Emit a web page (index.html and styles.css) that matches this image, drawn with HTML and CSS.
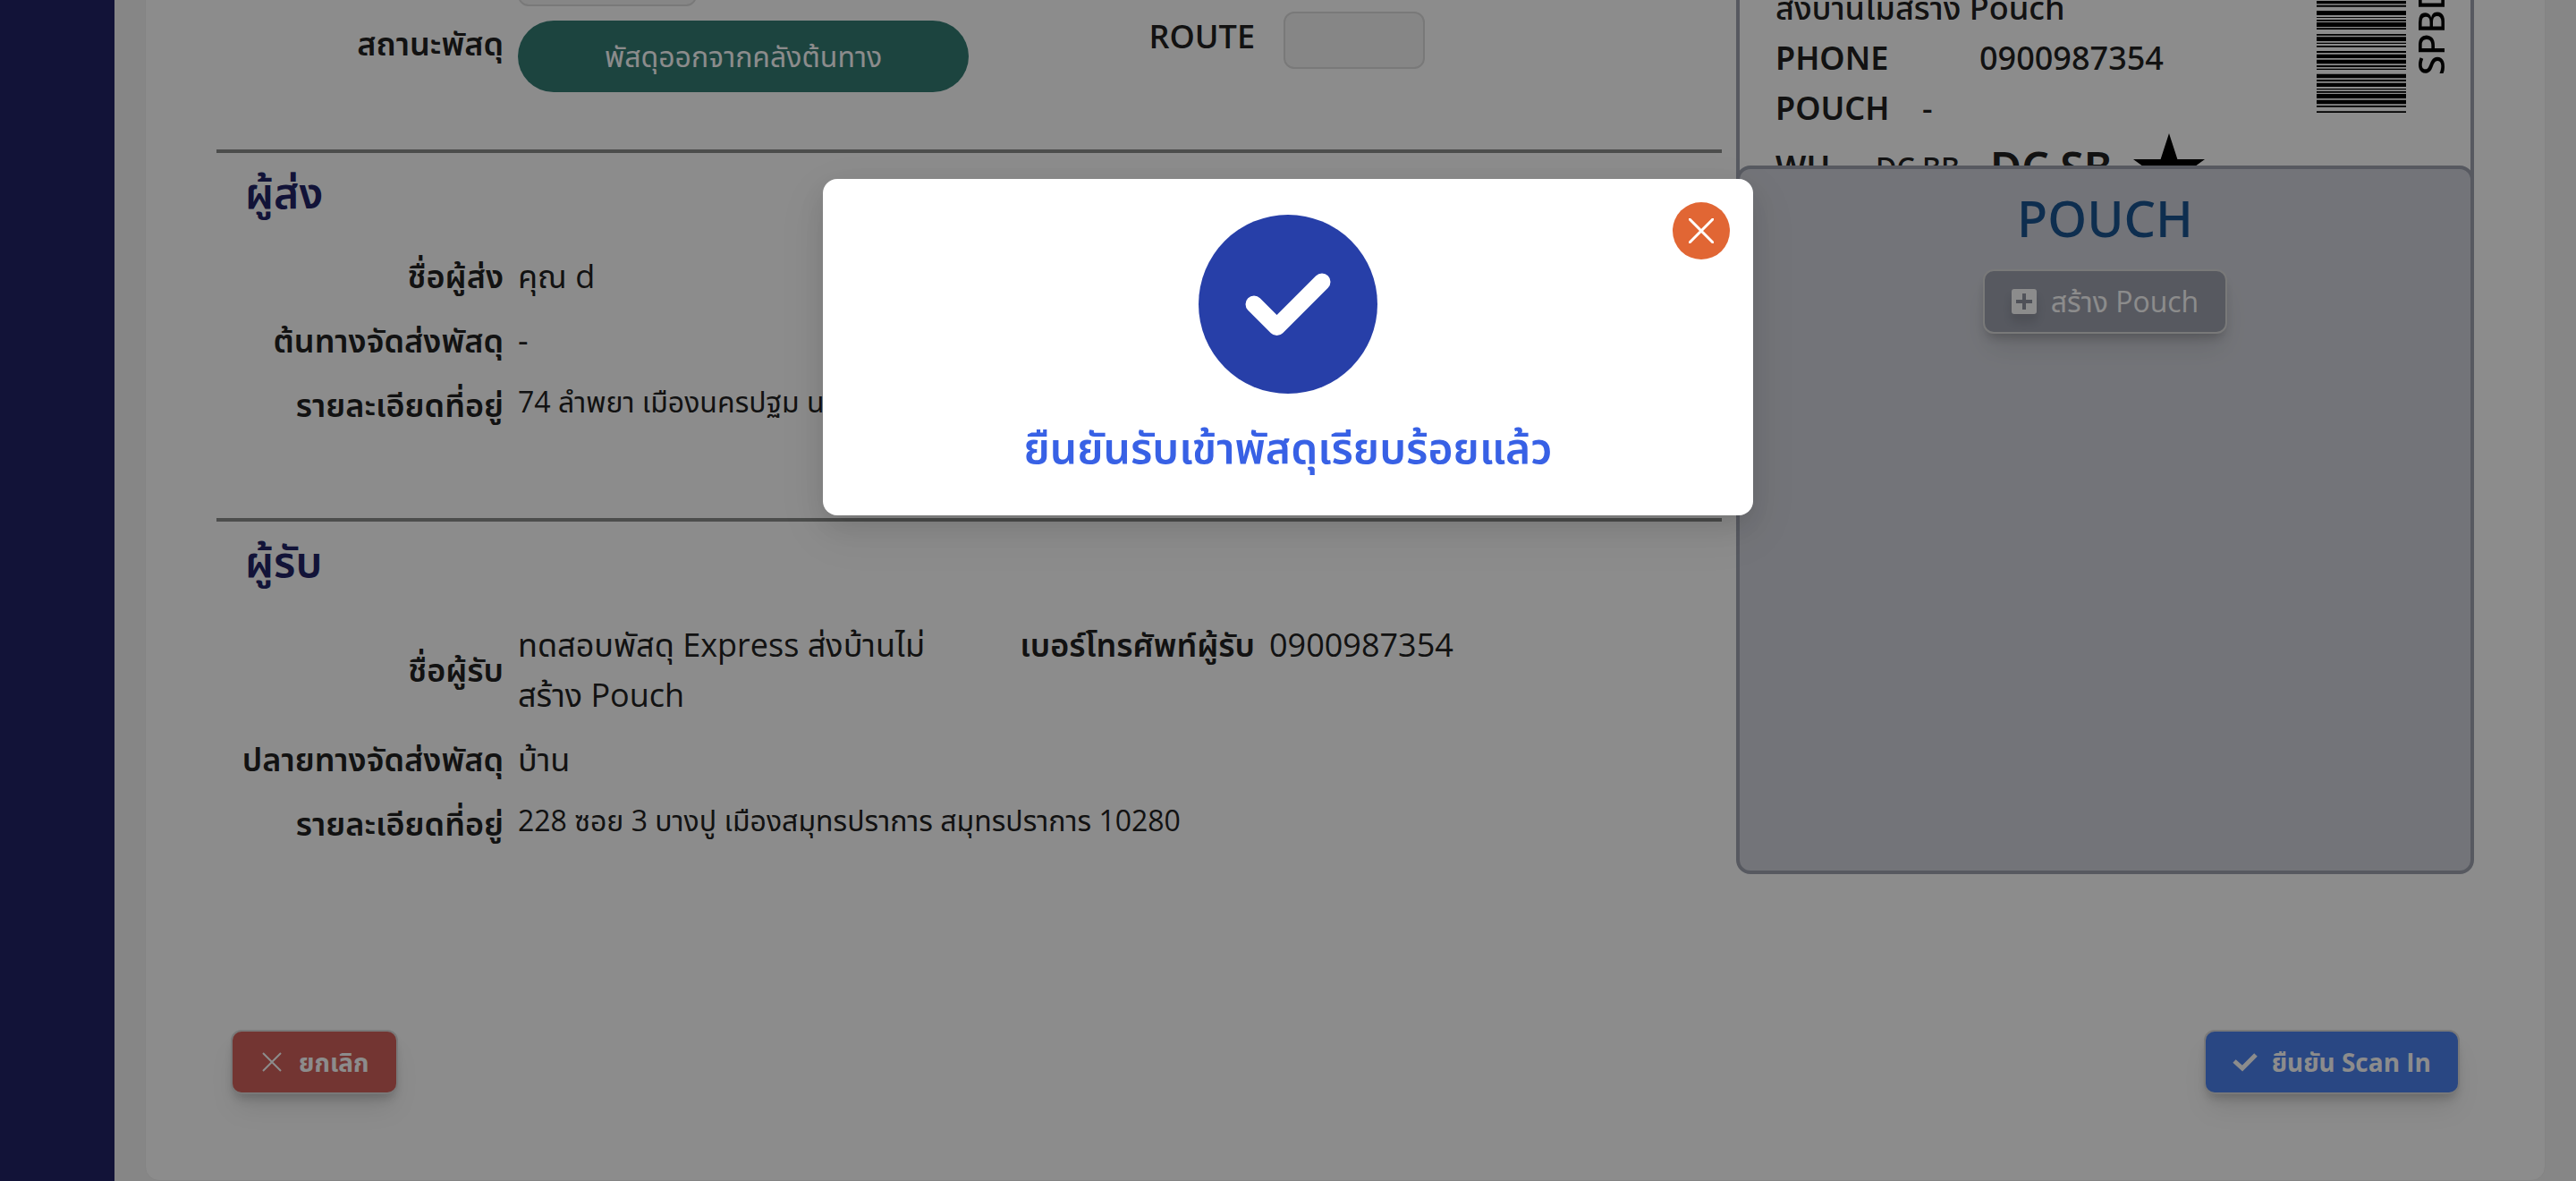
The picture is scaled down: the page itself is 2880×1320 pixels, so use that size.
FILE: index.html
```html
<!DOCTYPE html>
<html lang="th">
<head>
<meta charset="utf-8">
<title>Scan In</title>
<link rel="stylesheet" href="styles.css">
</head>
<body>
<div class="app">
  <aside class="sidebar"></aside>
  <div class="page">
    <main class="card">
      <div class="columns">
        <div class="details">
          <section class="summary">
            <div class="summary-left">
              <label class="label" for="size"></label>
              <input class="box box-wide" id="size" type="text" aria-label="ขนาด" readonly>
              <span class="label status-label">สถานะพัสดุ</span>
              <span class="pill">พัสดุออกจากคลังต้นทาง</span>
            </div>
            <div class="summary-right">
              <label class="label" for="route">ROUTE</label>
              <input class="box" id="route" type="text" readonly>
            </div>
          </section>
          <section class="party">
            <h2 class="party-title">ผู้ส่ง</h2>
            <dl class="fields">
              <dt class="label">ชื่อผู้ส่ง</dt><dd class="value">คุณ d</dd>
              <dt class="label">ต้นทางจัดส่งพัสดุ</dt><dd class="value">-</dd>
              <dt class="label">รายละเอียดที่อยู่</dt><dd class="value address">74 ลำพยา เมืองนครปฐม นครปฐม 73000</dd>
            </dl>
          </section>
          <section class="party">
            <h2 class="party-title">ผู้รับ</h2>
            <dl class="fields">
              <dt class="label">ชื่อผู้รับ</dt><dd class="value">ทดสอบพัสดุ Express ส่งบ้านไม่<br>สร้าง Pouch</dd>
              <dt class="label phone">เบอร์โทรศัพท์ผู้รับ</dt><dd class="value phone">0900987354</dd>
              <dt class="label">ปลายทางจัดส่งพัสดุ</dt><dd class="value">บ้าน</dd>
              <dt class="label">รายละเอียดที่อยู่</dt><dd class="value address">228 ซอย 3 บางปู เมืองสมุทรปราการ สมุทรปราการ 10280</dd>
            </dl>
          </section>
        </div>
        <div class="side">
          <section class="parcel">
            <div class="parcel-info">
              <p class="parcel-row">ส่งบ้านไม่สร้าง Pouch</p>
              <p class="parcel-row"><b class="key key-wide">PHONE</b><span>0900987354</span></p>
              <p class="parcel-row"><b class="key">POUCH</b><span>-</span></p>
              <p class="parcel-row hub"><b class="key key-hub">WH</b><span class="hub-from">DC BB</span><b class="hub-to">DC SB</b>
                <svg class="star" viewBox="0 0 80 76" aria-hidden="true"><path d="M40 0 49.400 29H80L55.300 47 64.700 76 40 58 15.300 76 24.700 47 0 29H30.600Z"/></svg></p>
            </div>
            <svg class="barcode" viewBox="0 0 100 375" preserveAspectRatio="none" aria-hidden="true"><path d="M0 0h100v10H0zM0 14h100v6H0zM0 33h100v15H0zM0 54h100v3H0zM0 63h100v5H0zM0 72h100v15H0zM0 91h100v5H0zM0 111h100v5H0zM0 121h100v14H0zM0 140h100v4H0zM0 150h100v5H0zM0 168h100v6H0zM0 179h100v13H0zM0 197h100v14H0zM0 216h100v6H0zM0 227h100v4H0zM0 245h100v14H0zM0 264h100v6H0zM0 275h100v13H0zM0 294h100v4H0zM0 303h100v5H0zM0 312h100v15H0zM0 332h100v14H0zM0 351h100v5H0zM0 370h100v5H0z"/></svg>
            <span class="tracking">SPBD</span>
          </section>
          <section class="pouch">
            <h2 class="pouch-title">POUCH</h2>
            <button class="btn btn-create" type="button"><svg class="icon-plus" viewBox="0 0 28 28" aria-hidden="true"><path fill-rule="evenodd" d="M3 0h22a3 3 0 0 1 3 3v22a3 3 0 0 1-3 3H3a3 3 0 0 1-3-3V3a3 3 0 0 1 3-3zM12 5v7H5v4h7v7h4v-7h7v-4h-7V5z"/></svg>สร้าง Pouch</button>
          </section>
        </div>
      </div>
      <footer class="actions">
        <button class="btn btn-cancel" type="button"><svg class="icon-x" viewBox="0 0 28 22" aria-hidden="true"><path d="M4 1 24 21M24 1 4 21"/></svg>ยกเลิก</button>
        <button class="btn btn-confirm" type="button"><svg class="icon-check" viewBox="0 0 28 22" aria-hidden="true"><path d="M2 10 11 18 26 3"/></svg>ยืนยัน Scan In</button>
      </footer>
    </main>
  </div>
</div>
<div class="overlay">
  <div class="modal" role="dialog" aria-modal="true" aria-labelledby="done">
    <button class="close" type="button" aria-label="ปิด"><svg class="icon-close" viewBox="0 0 28 28" aria-hidden="true"><path d="M1 1 27 27M27 1 1 27"/></svg></button>
    <svg class="success" viewBox="0 0 200 200" aria-hidden="true"><circle cx="100" cy="100" r="100"/><path d="M62 100 87.500 125.500 138 75"/></svg>
    <h1 class="modal-title" id="done">ยืนยันรับเข้าพัสดุเรียบร้อยแล้ว</h1>
  </div>
</div>
</body>
</html>
```
FILE: styles.css
```css
* { box-sizing: border-box; }

body {
  margin: 0;
  height: 100vh;
  overflow: hidden;
  background: #f5f5f5;
  color: #212121;
  font-family: "Open Sans", "Noto Sans Thai", "Noto Sans", sans-serif;
  font-size: 36px;
  line-height: 56px;
}

h1, h2, p, dl, dd { margin: 0; }
button, input { font: inherit; }

.app { display: flex; }
.sidebar { flex: none; width: 128px; background: #212466; }

/* The page is scrolled: its first rows sit above the window. */
.page { flex: 1; margin-top: -80px; padding: 0 34px 2px; }
.card {
  padding: 0 79px 96px;
  background: #fff;
  border: 1px solid #f0f0f0;
  border-radius: 16px;
}

.columns { display: grid; grid-template-columns: 1683fr 825fr; gap: 16px; }

.summary {
  display: grid;
  grid-template-columns: 841fr 842fr;
  height: 246px;
}
.summary-left {
  display: grid;
  grid-template-columns: 321fr 504fr;
  gap: 16px;
  align-content: start;
  padding-top: 22px;
}
.summary-right {
  display: grid;
  grid-template-columns: 320fr 490fr;
  column-gap: 32px;
  align-content: start;
  padding-top: 92px;
}
.label { font-weight: 600; text-align: right; }
.status-label { line-height: 52px; }
.box {
  width: 158px;
  height: 64px;
  padding: 0 16px;
  background: #f5f5f5;
  border: 2px solid #dcdcdc;
  border-radius: 12px;
}
.box-wide { width: 200px; }
.pill {
  height: 80px;
  border-radius: 40px;
  background: #337c74;
  color: #fff;
  font-size: 32px;
  line-height: 80px;
  text-align: center;
}

.party { height: 412px; border-top: 4px solid #8a8c8a; padding-top: 8px; }
.party-title {
  padding-left: 32px;
  color: #212466;
  font-size: 48px;
  font-weight: 600;
  line-height: 72px;
}
.fields {
  display: grid;
  grid-template-columns: 321fr 504fr 304fr 506fr;
  gap: 16px;
  align-items: center;
  padding-top: 30px;
}
.fields dt:not(.phone) { grid-column: 1; }
.value { white-space: nowrap; }
.phone { align-self: start; }
.address { grid-column: 2 / -1; font-size: 32px; line-height: 48px; align-self: start; }

.parcel {
  display: flex;
  height: 304px;
  padding: 60px 16px 0 40px;
  border: solid #9fa3b0;
  border-width: 0 4px;
  font-family: "Noto Sans", "Noto Sans Thai", sans-serif;
}
.parcel-info { flex: 1; }
.parcel-row { display: flex; font-weight: 500; }
.key { width: 164px; font-weight: 600; }
.key-wide { width: 228px; }
.key-hub { width: 112px; }
.hub { line-height: 76px; }
.hub-from { width: 128px; font-size: 32px; }
.hub-to { width: 160px; font-size: 48px; font-weight: 600; }
.star { width: 80px; height: 76px; }
.barcode { width: 100px; height: 125px; margin-top: 20px; }
.tracking {
  height: 103px;
  color: #000;
  font-size: 40px;
  font-weight: 500;
  writing-mode: vertical-rl;
  transform: rotate(180deg);
}

.pouch {
  position: relative;
  display: flex;
  flex-direction: column;
  align-items: center;
  height: 792px;
  margin-top: -40px;
  padding-top: 14px;
  background: #d2d4dc;
  border: 4px solid #9fa3b0;
  border-radius: 16px;
}
.pouch-title {
  color: #1b5490;
  font-family: "Noto Sans", sans-serif;
  font-size: 56px;
  font-weight: 500;
  line-height: 80px;
}

.btn {
  display: flex;
  align-items: center;
  height: 72px;
  padding: 0 30px;
  gap: 16px;
  border: 2px solid #dcdcdc;
  border-radius: 12px;
  color: #fff;
  font-size: 28px;
  font-weight: 700;
  box-shadow: 0 20px 30px -6px rgba(0, 0, 0, .1), 0 8px 12px -4px rgba(0, 0, 0, .2);
}
.btn-create { margin-top: 18px; background: #9fa3b0; font-size: 32px; font-weight: 400; }
.btn-cancel { background: #d1625b; }
.btn-confirm { background: #4c81ee; }
.actions { display: flex; justify-content: space-between; padding: 160px 16px 0; }

.icon-plus { width: 28px; height: 28px; fill: #fff; filter: drop-shadow(0 8px 6px rgba(0, 0, 0, .15)); }
.icon-x { width: 28px; height: 22px; fill: none; stroke: #fff; stroke-width: 2; }
.icon-check { width: 28px; height: 22px; fill: none; stroke: #fff; stroke-width: 5; }
.icon-close { width: 28px; height: 28px; fill: none; stroke: #fff; stroke-width: 3; stroke-linecap: round; }

.overlay {
  position: fixed;
  inset: 0;
  display: flex;
  justify-content: center;
  align-items: flex-start;
  padding-top: 200px;
  background: rgba(0, 0, 0, .45);
}
.modal {
  position: relative;
  display: flex;
  flex-direction: column;
  align-items: center;
  width: 1040px;
  padding: 40px;
  background: #fff;
  border-radius: 16px;
  box-shadow: 0 12px 32px rgba(0, 0, 0, .12), 0 18px 56px 16px rgba(0, 0, 0, .05);
}
.close {
  position: absolute;
  top: 26px;
  right: 26px;
  display: grid;
  place-items: center;
  width: 64px;
  height: 64px;
  padding: 0;
  border: 0;
  border-radius: 50%;
  background: #e16634;
}
.success { width: 200px; height: 200px; fill: #273fa8; }
.success path { fill: none; stroke: #fff; stroke-width: 19; stroke-linecap: round; stroke-linejoin: round; }
.modal-title { margin-top: 24px; color: #3861e5; font-size: 48px; font-weight: 600; line-height: 72px; }
```
